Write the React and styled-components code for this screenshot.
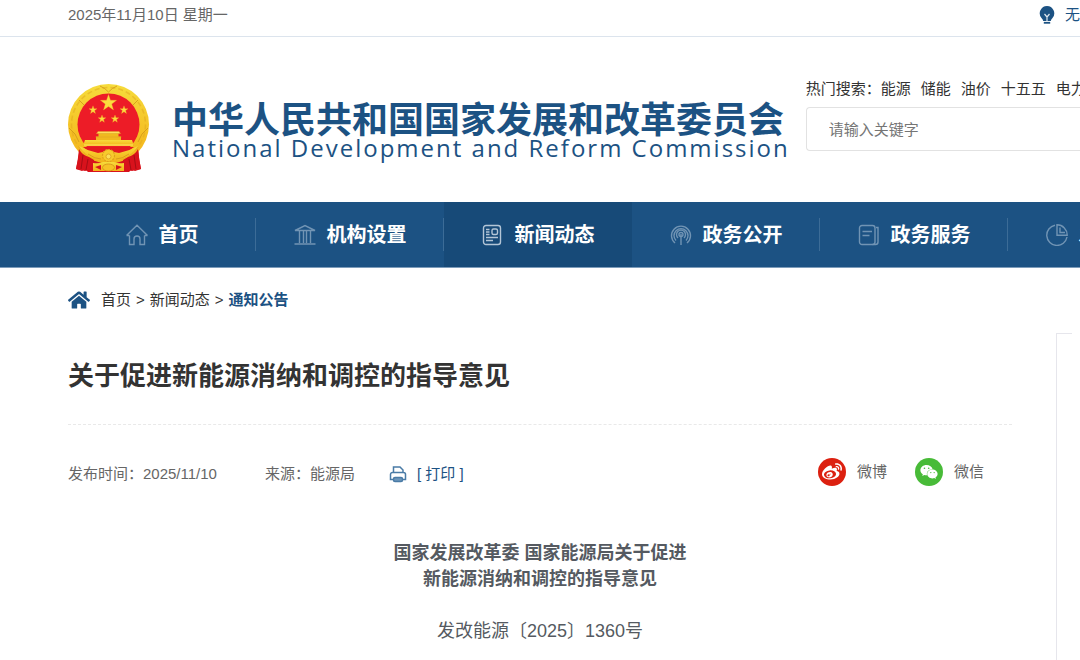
import React from "react";
import styled, { createGlobalStyle } from "styled-components";
import { FaHome, FaWeibo, FaWeixin } from "react-icons/fa";

const GlobalStyle = createGlobalStyle`
  * {
    box-sizing: border-box;
  }
  body {
    margin: 0;
    background: #fff;
    color: #333;
    font-family: "Liberation Sans", "Noto Sans CJK SC", sans-serif;
    font-size: 15px;
    line-height: 24px;
  }
  a {
    color: inherit;
    text-decoration: none;
  }
  h1, h2, p {
    margin: 0;
  }
`;

const hotWords = ["能源", "储能", "油价", "十五五", "电力"];

const navItems = [
  { label: "首页", icon: <HouseIcon /> },
  { label: "机构设置", icon: <BankIcon /> },
  { label: "新闻动态", icon: <NewsIcon />, active: true },
  { label: "政务公开", icon: <SignalIcon /> },
  { label: "政务服务", icon: <PaperIcon /> },
  { label: "发改数据", icon: <PieIcon /> },
];

function HouseIcon() {
  return (
    <NavSvg viewBox="0 0 22 22">
      <path d="M0.500 11.500 11 1.200l10.500 10.300M3.500 11.500V20.500h4.500v-5.500a3 3 0 0 1 6 0v5.500h4.500V11.500M0.500 11.500h3M18.500 11.500h3" />
    </NavSvg>
  );
}

function BankIcon() {
  return (
    <NavSvg viewBox="0 0 22 22">
      <path d="M1 6.500 11 1.500l10 5H1zM5.500 7v12M9.500 7v12M12.500 7v12M16.500 7v12M0.500 20h21" />
    </NavSvg>
  );
}

function NewsIcon() {
  return (
    <NavSvg viewBox="0 0 22 22" $bright>
      <rect x="1.500" y="1.500" width="17" height="19" rx="2.500" />
      <rect x="10" y="5" width="5.500" height="5.500" rx="1.500" />
      <path d="M4 5.500h3.500M4 8h3.500M4 10.500h3.500M4 13.500h12M4 16.500h7" />
    </NavSvg>
  );
}

function SignalIcon() {
  return (
    <NavSvg viewBox="0 0 22 22">
      <path d="M5 19A9.500 9.500 0 1 1 17 19M6 16.500a7 7 0 1 1 10 0M8 14a4.500 4.500 0 1 1 6 0M11 10v11" />
      <circle cx="11" cy="10.500" r="2" />
    </NavSvg>
  );
}

function PaperIcon() {
  return (
    <NavSvg viewBox="0 0 22 22">
      <rect x="1.500" y="1.500" width="15.500" height="19" rx="2.500" />
      <path d="M4.500 7.500h9.500M4.500 11.500h7M18 3.500h2v14.500a2.500 2.500 0 0 1-2.500 2.500h-3" />
    </NavSvg>
  );
}

function PieIcon() {
  return (
    <NavSvg viewBox="0 0 22 22">
      <path d="M9 1.200A10.200 10.200 0 1 0 21 13M11 0.800v10.500h10.200A10.200 10.200 0 0 0 11 0.800zM14 3.500v5h5" />
    </NavSvg>
  );
}

function BulbIcon() {
  return (
    <svg width="16" height="18" viewBox="0 0 16 18" aria-hidden="true">
      <path d="M8 0a7.300 7.300 0 0 1 5.500 12q-1.500 1.500-1.700 3H4.200q-.2-1.500-1.700-3A7.300 7.300 0 0 1 8 0z" fill="#1c5283" />
      <path d="M5.500 8 8 11l2.500-3M8 11V15" fill="none" stroke="#dfe8f0" strokeWidth="1.200" />
      <path d="M4.800 16.800h6.400" stroke="#1c5283" strokeWidth="1.800" />
    </svg>
  );
}

function PrinterIcon() {
  return (
    <svg width="18" height="18" viewBox="0 0 18 18" fill="none" stroke="#4a7ba6" strokeWidth="1.500" aria-hidden="true">
      <path d="M4.500 7.500V2h6.500l3 3v2.500M4 14.500H1.500V9.500a2 2 0 0 1 2-2h11a2 2 0 0 1 2 2v5H14" />
      <rect x="4.500" y="12.500" width="9" height="4" rx="1.500" fill="#6d96ba" />
    </svg>
  );
}

// five-pointed star centred on x, y
function Star({ x, y, r }) {
  const points = Array.from({ length: 10 }, (_, i) => {
    const radius = i % 2 ? r * 0.4 : r;
    const angle = (Math.PI / 5) * i - Math.PI / 2;
    return `${x + radius * Math.cos(angle)},${y + radius * Math.sin(angle)}`;
  }).join(" ");
  return <polygon points={points} fill="#fbdc3e" stroke="#f0b528" strokeWidth="0.300" />;
}

function Emblem() {
  return (
    <svg width="82" height="90" viewBox="8 5 82 90" role="img" aria-label="国徽">
      <defs>
        <linearGradient id="gold" x1="0" y1="0" x2="0" y2="1">
          <stop offset="0" stopColor="#f6dc3c" />
          <stop offset="0.600" stopColor="#f5c024" />
          <stop offset="1" stopColor="#f3b31c" />
        </linearGradient>
        <clipPath id="ring">
          <path d="M0 0h100v66L79 74q-12 10-30 12-19-2-31-12L0 66z" />
        </clipPath>
      </defs>
      {/* drapery */}
      <path d="M20 70q13 10 29 9 16 1 29-9 1 12 3 21l-6 2-3-2-3 3H28l-3-3-3 2-6-2q2-9 4-21z" fill="#d8121c" />
      <circle cx="48.500" cy="46.500" r="40.500" fill="url(#gold)" clipPath="url(#ring)" />
      {/* ears of wheat */}
      <circle cx="48.500" cy="46.500" r="37" fill="none" stroke="#dfa51e" strokeWidth="1.500" strokeDasharray="5 3" opacity="0.500" clipPath="url(#ring)" />
      <path d="M9 50q7 5 10 14M88 50q-7 5-10 14M19 22l5 5M78 22l-5 5M40 8q5 2 8.500 6 3.500-4 8.500-6" stroke="#cf9519" strokeWidth="0.800" fill="none" />
      <circle cx="48.500" cy="46.500" r="31" fill="#ed1c27" />
      <path d="M19 71q3 6 10 8l5 3v11l-5-1-4 1-4-1-5-1q2-9 3-20zM78 71q-3 6-10 8l-5 3v11l5-1 4 1 4-1 5-1q-2-9-3-20z" fill="#d8121c" />
      <path d="M23 77l-2 14M28 81l-2 11M74 77l2 14M69 81l2 11" stroke="#a50d14" strokeWidth="1" fill="none" />
      <Star x={48.5} y={25} r={8.5} />
      <Star x={33} y={32} r={4.2} />
      <Star x={64} y={32} r={4.2} />
      <Star x={42} y={41} r={4} />
      <Star x={55} y={41} r={4} />
      {/* gate tower */}
      <path d="M38.500 54h20v4.500h2.500v4.500H36v-4.500h2.500z" fill="#f0b91f" />
      <path d="M38 53.500h21l1.500 2h-24zM35.500 59h26" fill="#fbe05a" stroke="#dda024" strokeWidth="0.500" />
      <path d="M25 62h47l2 6H23z" fill="url(#gold)" />
      <path d="M24 67h49" stroke="#ffe765" strokeWidth="1.200" />
      <path d="M23 69h51l-9 7H32z" fill="#e41820" />
      <path d="M19 68q9 5 19 7l5-1q5-5 11 0l5 1q10-2 19-7-6 9-14 12-5 3-10 4H43q-5-1-10-4-8-3-14-12z" fill="url(#gold)" />
      <path d="M28 76q7 5 13 5M69 76q-7 5-13 5" stroke="#d2941b" strokeWidth="0.800" fill="none" />
      <path d="M33 85q6 1 10-1h11q4 2 10 1v8H33z" fill="url(#gold)" />
      <path d="M35 89l6-2v5zM62 89l-6-2v5z" fill="#d8121c" />
      <circle cx="48.500" cy="77.500" r="6" fill="#f7ca2d" stroke="#e0a01d" strokeWidth="1.200" strokeDasharray="2 1" />
      <circle cx="48.500" cy="78.500" r="2.500" fill="#fbe05a" stroke="#dc9a1c" strokeWidth="0.800" />
      <ellipse cx="48.500" cy="89.500" rx="6" ry="3.500" fill="#f6c226" stroke="#d08a18" strokeWidth="0.700" />
    </svg>
  );
}

export default function App() {
  return (
    <PageStyled>
      <GlobalStyle />
      <TopBar>
        <span>2025年11月10日 星期一</span>
        <AccessLink href="#">
          <BulbIcon />
          无
        </AccessLink>
      </TopBar>

      <Header>
        <Brand href="#">
          <Emblem />
          <BrandText>
            <BrandName>中华人民共和国国家发展和改革委员会</BrandName>
            <BrandEnglish>National Development and Reform Commission</BrandEnglish>
          </BrandText>
        </Brand>
        <SearchArea>
          <HotWords>
            <span>热门搜索：</span>
            <HotList>
              {hotWords.map((word) => (
                <a href="#" key={word}>{word}</a>
              ))}
            </HotList>
          </HotWords>
          <SearchInput type="text" placeholder="请输入关键字" aria-label="请输入关键字" />
        </SearchArea>
      </Header>

      <Nav>
        {navItems.map((item) => (
          <NavItem href="#" key={item.label} $active={item.active}>
            {item.icon}
            {item.label}
          </NavItem>
        ))}
      </Nav>

      <Content>
        <Article>
          <Breadcrumb>
            <FaHome size={22} color="#1c5283" />
            <Crumbs>
              <a href="#">首页</a>
              <span>&gt;</span>
              <a href="#">新闻动态</a>
              <span>&gt;</span>
              <Current href="#">通知公告</Current>
            </Crumbs>
          </Breadcrumb>
          <Title>关于促进新能源消纳和调控的指导意见</Title>
          <MetaRow>
            <Published>发布时间：2025/11/10</Published>
            <Source>来源：能源局</Source>
            <PrintButton type="button">
              <PrinterIcon />
              [ 打印 ]
            </PrintButton>
            <ShareList>
              <ShareLink href="#">
                <ShareBadge $color="#dc2010"><FaWeibo size={20} /></ShareBadge>
                微博
              </ShareLink>
              <ShareLink href="#">
                <ShareBadge $color="#48bb38"><FaWeixin size={18} /></ShareBadge>
                微信
              </ShareLink>
            </ShareList>
          </MetaRow>
          <DocHeading>
            国家发展改革委 国家能源局关于促进
            <br />
            新能源消纳和调控的指导意见
          </DocHeading>
          <DocNumber>发改能源〔2025〕1360号</DocNumber>
        </Article>
        <Sidebar>
          <SidebarEdge />
        </Sidebar>
      </Content>
    </PageStyled>
  );
}

const PageStyled = styled.div`
  display: flex;
  flex-direction: column;
  min-height: 100vh;
  overflow: hidden;
`;

const TopBar = styled.div`
  display: flex;
  justify-content: space-between;
  padding: 3px 0 9px 68px;
  border-bottom: 1px solid #dce4ed;
  color: #666;
`;

const AccessLink = styled.a`
  display: flex;
  align-items: center;
  gap: 10px;
  color: #1c5283;
`;

const Header = styled.header`
  display: flex;
  align-items: flex-start;
  gap: 16px;
  padding: 40px 0 29px 68px;
`;

const Brand = styled.a`
  display: flex;
  align-items: flex-start;
  gap: 22px;
  padding-top: 6px;
  color: #1c5283;
  white-space: nowrap;
`;

const BrandText = styled.div`
  padding-top: 20px;
`;

const BrandName = styled.div`
  font-size: 36px;
  font-weight: 700;
  line-height: 36px;
`;

const BrandEnglish = styled.div`
  font-family: "Open Sans", sans-serif;
  font-size: 24px;
  line-height: 18px;
  letter-spacing: 2px;
`;

const SearchArea = styled.div`
  flex: 1;
  min-width: 0;
`;

const HotWords = styled.div`
  display: flex;
  overflow: hidden;
  white-space: nowrap;
`;

const HotList = styled.div`
  display: flex;
  gap: 10px;
`;

const SearchInput = styled.input`
  display: block;
  width: 100%;
  height: 44px;
  margin-top: 6px;
  padding: 0 22px;
  border: 1px solid #e2e2e2;
  border-right: 0;
  border-radius: 4px 0 0 4px;
  font: inherit;
  outline: none;

  &::placeholder {
    color: #757575;
  }
`;

const Nav = styled.nav`
  display: flex;
  padding-left: 68px;
  background: #1c5283;
  border-bottom: 1px solid #7d9cba;
`;

const NavItem = styled.a`
  display: flex;
  flex: 0 0 188px;
  align-items: center;
  justify-content: center;
  gap: 11px;
  height: 65px;
  background: ${(props) =>
    props.$active
      ? "#174a78"
      : "linear-gradient(#3c6c97, #3c6c97) right center / 1px 33px no-repeat"};
  color: #fff;
  font-size: 20px;
  font-weight: 700;
  white-space: nowrap;
`;

const NavSvg = styled.svg`
  flex: none;
  width: 22px;
  height: 22px;
  fill: none;
  stroke: ${(props) => (props.$bright ? "#b3c5d6" : "#7194b4")};
  stroke-width: 1.4;
`;

const Content = styled.main`
  display: flex;
  flex: 1;
  gap: 44px;
  padding-left: 68px;
`;

const Article = styled.article`
  flex: 1;
`;

const Breadcrumb = styled.div`
  display: flex;
  align-items: center;
  gap: 11px;
  padding-top: 20px;
`;

const Crumbs = styled.div`
  display: flex;
  gap: 5px;
`;

const Current = styled.a`
  color: #1c5283;
  font-weight: 700;
`;

const Title = styled.h1`
  padding: 44px 0 28px;
  border-bottom: 1px dashed #e9e9e9;
  font-size: 26px;
  line-height: 40px;
`;

const MetaRow = styled.div`
  display: flex;
  align-items: flex-end;
  padding: 33px 28px 54px 0;
  color: #666;
`;

const Published = styled.span`
  margin-right: 48px;
`;

const Source = styled.span`
  margin-right: 34px;
`;

const PrintButton = styled.button`
  display: flex;
  align-items: center;
  gap: 10px;
  padding: 0;
  border: 0;
  background: none;
  color: #1c5283;
  font: inherit;
  cursor: pointer;
`;

const ShareList = styled.div`
  display: flex;
  gap: 28px;
  margin-left: auto;
`;

const ShareLink = styled.a`
  display: flex;
  align-items: center;
  gap: 11px;
`;

const ShareBadge = styled.span`
  display: grid;
  place-items: center;
  width: 28px;
  height: 28px;
  border-radius: 50%;
  background: ${(props) => props.$color};
  color: #fff;
`;

const DocHeading = styled.h2`
  color: #555a61;
  font-size: 18px;
  line-height: 26px;
  text-align: center;
`;

const DocNumber = styled.p`
  padding: 26px 0 16px;
  color: #555a61;
  font-size: 18px;
  line-height: 26px;
  text-align: center;
`;

const Sidebar = styled.aside`
  display: flex;
  flex: 0 0 24px;
  padding-top: 65px;
`;

const SidebarEdge = styled.div`
  width: 16px;
  border-top: 1px solid #e6e6ec;
  border-left: 1px solid #e6e6ec;
`;
